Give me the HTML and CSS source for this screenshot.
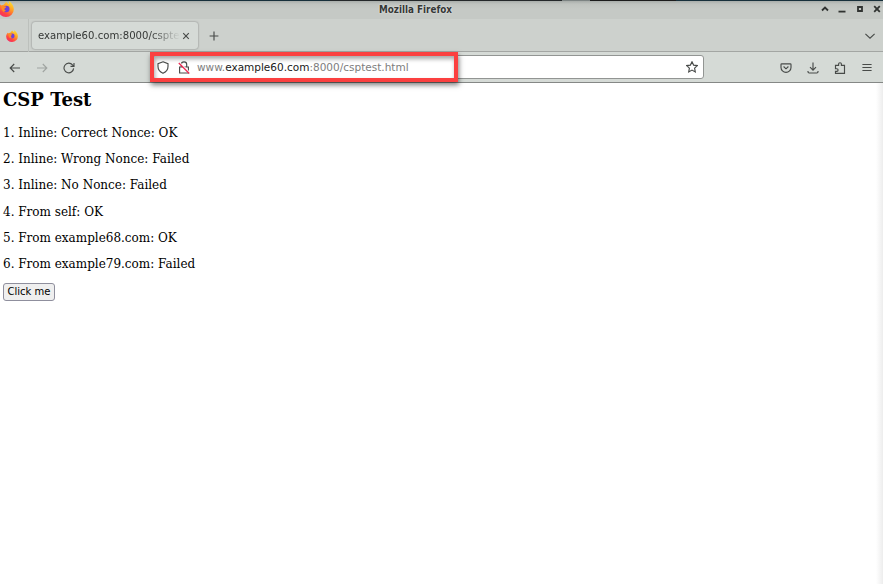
FILE: index.html
```html
<!DOCTYPE html>
<html lang="en">
<head>
<meta charset="utf-8">
<title>Mozilla Firefox</title>
<link rel="stylesheet" href="styles.css">
</head>
<body>
<svg class="defs" width="0" height="0">
  <defs>
    <linearGradient id="flame" x1="0.8" y1="0" x2="0.2" y2="1">
      <stop offset="0" stop-color="#ffe52e"/><stop offset=".4" stop-color="#ff9a24"/><stop offset=".75" stop-color="#ff4146"/><stop offset="1" stop-color="#f02d6c"/>
    </linearGradient>
    <symbol id="fox" viewBox="0 0 16 16">
      <path fill="url(#flame)" d="M2.4 3.6 3.5 4.6C4.3 3.9 5 3.7 5.7 3.8L8.2.8C8.9 2 10.5 2.6 11 3.5L10.8.2C13.5 1.7 16 5 15.8 8.5A7.8 7.4 0 0 1 .2 8.7C.2 6.7 1 5 2.4 3.6Z"/>
      <circle cx="8.2" cy="8" r="3.3" fill="#7040d8"/>
      <path fill="#ff8a25" d="M3.5 4.8 7.7 5.6C8.6 5.9 8.3 7 6.8 7.3 6 8.4 6.7 9.4 8 9.7L5.4 11C3.8 9.2 3 7 3.5 4.8Z"/>
    </symbol>
  </defs>
</svg>
<div class="window">
  <div class="desktop-edge"></div>
  <header class="titlebar">
    <svg class="app-icon" width="16" height="16"><use href="#fox"/></svg>
    <span class="window-title">Mozilla Firefox</span>
    <div class="window-buttons">
      <svg viewBox="0 0 8 8"><path d="M1 5.5 4 2.5 7 5.5"/></svg>
      <svg viewBox="0 0 8 8"><path d="M.5 6.6H7.5"/></svg>
      <svg viewBox="0 0 8 8"><path d="M2 2H6V6H2Z"/></svg>
      <svg viewBox="0 0 8 8"><path d="M1.2 1.2 6.8 6.8M6.8 1.2 1.2 6.8"/></svg>
    </div>
  </header>
  <div class="tabs">
    <div class="pinned"><svg width="12" height="12"><use href="#fox"/></svg></div>
    <div class="tab">
      <span class="tab-label">example60.com:8000/csptes</span>
      <svg class="close" viewBox="0 0 8 8"><path d="M1.2 1.2 6.8 6.8M6.8 1.2 1.2 6.8"/></svg>
    </div>
    <svg class="plus" viewBox="0 0 10 10"><path d="M5 .6V9.4M.6 5H9.4"/></svg>
    <svg class="all-tabs" viewBox="0 0 12 8"><path d="M1.4 1.8 6 6.2 10.6 1.8"/></svg>
  </div>
  <nav class="toolbar">
    <div class="nav-buttons">
      <svg viewBox="0 0 12 12"><path d="M11 6H1.2M5.2 2 1.2 6 5.2 10"/></svg>
      <svg class="off" viewBox="0 0 12 12"><path d="M1 6H10.8M6.8 2 10.8 6 6.8 10"/></svg>
      <svg viewBox="0 0 12 12"><path d="M10.6 6.4A4.8 4.8 0 1 1 9.5 2.9L10.8 4.2M11 .9V4.4H7.5"/></svg>
    </div>
    <div class="urlbar">
      <svg class="shield" viewBox="0 0 12 13"><path d="M6 .8 11 2.6V5.5C11 9 9 11 6 12.3 3 11 1 9 1 5.5V2.6Z"/></svg>
      <svg class="lock" viewBox="0 0 12 13"><path d="M3.3 6V3.6A2.7 2.7 0 0 1 8.7 3.6V6M1.6 6H10.4V12H1.6Z"/><path class="halo" d="M1.6 1.4 12 11.8"/><path class="strike" d="M.8 2 11.3 12.5"/></svg>
      <span class="url">www.<b>example60.com</b>:8000/csptest.html</span>
      <svg class="star" viewBox="0 0 12 12"><path d="M6 .8 7.6 4.1 11.3 4.6 8.6 7.1 9.3 10.9 6 9.1 2.7 10.9 3.4 7.1.7 4.6 4.4 4.1Z"/></svg>
      <div class="highlight"></div>
    </div>
    <div class="actions">
      <svg viewBox="0 0 12 12"><path d="M1.7 1.8H10.3Q11 1.8 11 2.5V5.5A5 4.8 0 0 1 1 5.5V2.5Q1 1.8 1.7 1.8ZM3.6 4.5 6 6.8 8.4 4.5"/></svg>
      <svg viewBox="0 0 12 12"><path d="M6 .5V8M3 5.2 6 8.2 9 5.2M1 9V9.8Q1 11 2.2 11H9.8Q11 11 11 9.8V9"/></svg>
      <svg viewBox="0 0 12 12"><path d="M1.5 5.4V3.4H4.6V2.1A1.4 1.4 0 0 1 7.4 2.1V3.4H10.5V11.4H1.5V9.3H2.8A1.3 1.3 0 0 0 2.8 6.7H1.5V5"/></svg>
      <svg viewBox="0 0 12 12"><path d="M1.4 2.5H10.6M1.4 5.5H10.6M1.4 8.5H10.6"/></svg>
    </div>
  </nav>
  <main class="page">
    <h1>CSP Test</h1>
    <p>1. Inline: Correct Nonce: OK</p>
    <p>2. Inline: Wrong Nonce: Failed</p>
    <p>3. Inline: No Nonce: Failed</p>
    <p>4. From self: OK</p>
    <p>5. From example68.com: OK</p>
    <p>6. From example79.com: Failed</p>
    <button>Click me</button>
  </main>
</div>
</body>
</html>
```
FILE: styles.css
```css
* { box-sizing: border-box; }
body { margin: 0; font-family: "DejaVu Sans", sans-serif; background: #fff; overflow: hidden; }
.defs { position: absolute; }
svg { display: block; flex: none; fill: none; stroke: #484b49; stroke-width: 1.15; }
use { stroke: none; }
.window { height: 584px; display: flex; flex-direction: column; }
.desktop-edge { height: 1px; background: linear-gradient(90deg, #17303b 330px, #24282a 330px 562px, #7d8483 562px 590px, #1c1c1c 590px 676px, #17303b 676px); }
.titlebar { height: 18px; display: grid; grid-template-columns: 14px 1fr 66px; align-items: center; background: linear-gradient(#a8adaa, #bfc3bf 3px, #c5c9c5 8px); }
.app-icon { margin: -2px 0 0 -2px; }
.window-title { justify-self: center; font-family: "DejaVu Sans Condensed", "DejaVu Sans", sans-serif; font-stretch: condensed; font-size: 9.8px; line-height: 18px; font-weight: bold; color: #353836; text-shadow: 0 0 2px #eee; }
.window-buttons { display: flex; gap: 9.4px; margin: -2px 0 0 4px; }
.window-buttons svg { width: 8px; height: 8px; stroke: #303331; stroke-width: 1.8; }
.tabs { height: 33px; display: flex; align-items: center; background: #cdd1cd; border-bottom: 1px solid #a3a6a3; }
.pinned { width: 29px; height: 33px; padding: 11px 0 0 6px; border-right: 1px solid #bcc0bc; }
.tab { width: 166px; height: 27px; margin: 1px 1px 0 3px; padding: 0 8px 0 6px; display: flex; align-items: center; border-radius: 3px; background: #d5dad6; box-shadow: 0 0 2px #777; }
.tab-label { width: 142px; white-space: nowrap; font-size: 10.15px; color: #353836; -webkit-mask-image: linear-gradient(90deg, #000 112px, transparent 142px); mask-image: linear-gradient(90deg, #000 112px, transparent 142px); }
.close { width: 8px; height: 8px; margin-left: 2px; }
.plus { width: 10px; height: 10px; margin: 2px 0 0 10px; }
.all-tabs { width: 12px; height: 8px; margin: 1px 7px 0 auto; }
.toolbar { height: 31px; display: flex; align-items: center; background: #d5dad6; border-bottom: 1px solid #858886; }
.nav-buttons { width: 152px; padding: 1px 0 0 9px; display: flex; gap: 15px; }
.nav-buttons svg { width: 12px; height: 12px; }
.nav-buttons .off { stroke: #a0a4a1; }
.urlbar { position: relative; width: 552px; height: 24px; padding: 0 5px 0 4px; display: flex; align-items: center; border: 1px solid #929593; border-radius: 3px; background: #fff; }
.shield { width: 12px; height: 13px; }
.lock { width: 12px; height: 13px; margin-left: 9px; }
.lock .halo { stroke: #fff; stroke-width: 1.2; }
.lock .strike { stroke: #f02c55; stroke-width: 1.3; }
.url { margin-left: 7px; font-size: 10.5px; color: #7d7d7d; }
.url b { font-weight: normal; color: #202020; }
.star { width: 12px; height: 12px; margin-left: auto; }
.highlight { position: absolute; left: -3px; top: -4px; width: 308px; height: 30px; border: 4px solid #fb4040; box-shadow: 1px 3px 5px rgba(0,0,0,.5), inset 1px 3px 4px rgba(0,0,0,.35); }
.actions { margin-left: auto; padding: 1px 10px 0 0; display: flex; gap: 15px; }
.actions svg { width: 12px; height: 12px; }
.page { flex: 1; padding: 7px 3px; font-family: "DejaVu Serif", serif; color: #000; background: linear-gradient(270deg, #ededed, #fff 7px); }
h1 { margin: 0 0 14.9px; font-size: 18px; line-height: 20px; }
h1 + p { padding-top: 1px; }
p { margin: 0 0 12.25px; font-size: 12px; line-height: 14px; }
button { display: block; width: 52px; height: 18px; margin-top: -.5px; padding: 0; border: 1px solid #8f8f9d; border-radius: 3px; background: #efefef; font: 10px/16px "DejaVu Sans", sans-serif; color: #000; }
```
